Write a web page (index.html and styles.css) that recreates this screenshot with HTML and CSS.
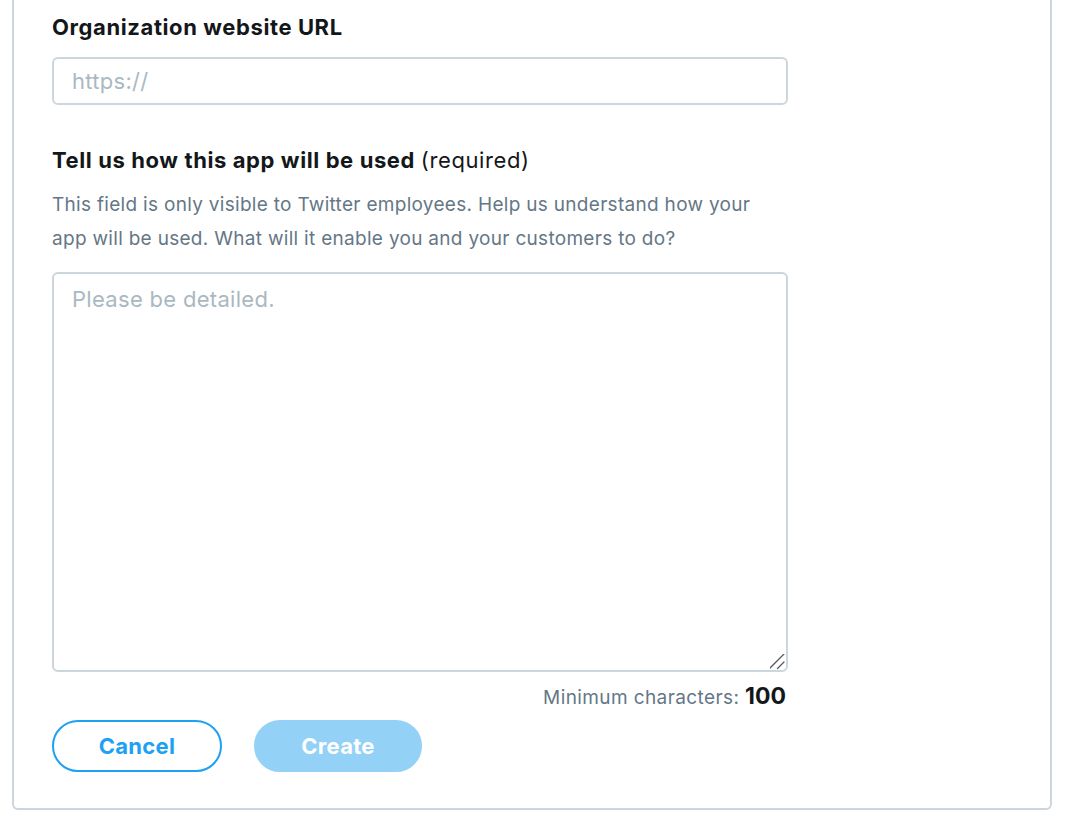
FILE: index.html
```html
<!DOCTYPE html>
<html lang="en">
<head>
<meta charset="utf-8">
<title>Create app</title>
<link rel="stylesheet" href="styles.css">
</head>
<body>
<div class="card">
  <form class="form">
    <label class="label" for="url">Organization website URL</label>
    <input class="input" id="url" type="text" placeholder="https://">

    <label class="label label-use" for="use">Tell us how this app will be used <span class="req">(required)</span></label>
    <p class="desc">This field is only visible to Twitter employees. Help us understand how your app will be used. What will it enable you and your customers to do?</p>
    <div class="area-wrap">
      <textarea class="textarea" id="use" placeholder="Please be detailed."></textarea>
      <svg class="grip" width="16" height="16" viewBox="0 0 16 16" aria-hidden="true">
        <path d="M-0.5 14.5 L14 0 M7.5 14.5 L14 8" stroke="#555b61" stroke-width="1.3" fill="none" stroke-linecap="round"/>
      </svg>
    </div>
    <div class="min">Minimum characters: <strong class="min-num">100</strong></div>

    <div class="actions">
      <button type="button" class="btn btn-cancel">Cancel</button>
      <button type="button" class="btn btn-create" disabled>Create</button>
    </div>
  </form>
</div>
</body>
</html>
```

FILE: styles.css
```css
html, body {
  margin: 0;
  padding: 0;
  background: #ffffff;
}

body {
  font-family: Inter, "Noto Sans", "Liberation Sans", sans-serif;
  color: #14171a;
}

.card {
  box-sizing: border-box;
  width: 1040px;
  margin-left: 12px;
  border: 2px solid #ccd6dd;
  border-top: 0;
  border-radius: 0 0 6px 6px;
  padding: 13px 38px 36px 38px;
}

.form {
  width: 736px;
  display: flex;
  flex-direction: column;
}

.label {
  display: block;
  font-size: 22px;
  font-weight: 700;
  letter-spacing: 0.6px;
  line-height: 28px;
  color: #14171a;
}

.req {
  font-weight: 400;
}

.input {
  box-sizing: border-box;
  margin-top: 16px;
  width: 736px;
  height: 48px;
  border: 2px solid #ccd6dd;
  border-radius: 6px;
  padding: 0 18px;
  font-family: inherit;
  font-size: 22px;
  letter-spacing: 0.3px;
  color: #14171a;
  outline: none;
}

.input::placeholder,
.textarea::placeholder {
  color: #aab8c2;
}

.label-use {
  margin-top: 41px;
}

.desc {
  margin: 14px 0 0 0;
  font-size: 19px;
  letter-spacing: 0.3px;
  line-height: 34px;
  color: #657786;
}

.area-wrap {
  position: relative;
  margin-top: 16px;
  width: 736px;
  height: 400px;
}

.textarea {
  display: block;
  box-sizing: border-box;
  width: 736px;
  height: 400px;
  margin: 0;
  border: 2px solid #ccd6dd;
  border-radius: 6px;
  padding: 11px 18px;
  font-family: inherit;
  font-size: 22px;
  letter-spacing: 0.3px;
  line-height: 28px;
  color: #14171a;
  outline: none;
  resize: none;
}

.grip {
  position: absolute;
  right: 2px;
  bottom: 2px;
  pointer-events: none;
}

.min {
  margin-top: 10px;
  text-align: right;
  font-size: 19px;
  letter-spacing: 0.4px;
  line-height: 28px;
  color: #657786;
  padding-right: 2px;
}

.min-num {
  font-size: 23px;
  font-weight: 700;
  letter-spacing: 0;
  color: #14171a;
}

.actions {
  margin-top: 8px;
  display: flex;
  gap: 32px;
}

.btn {
  box-sizing: border-box;
  height: 52px;
  border-radius: 26px;
  font-family: inherit;
  font-size: 22px;
  font-weight: 700;
  letter-spacing: 0.3px;
  padding: 0;
  cursor: pointer;
}

.btn-cancel {
  width: 170px;
  background: #ffffff;
  border: 2px solid #1da1f2;
  color: #1da1f2;
}

.btn-create {
  width: 168px;
  background: #94d1f7;
  border: 2px solid #94d1f7;
  color: #ffffff;
  cursor: default;
}
```
